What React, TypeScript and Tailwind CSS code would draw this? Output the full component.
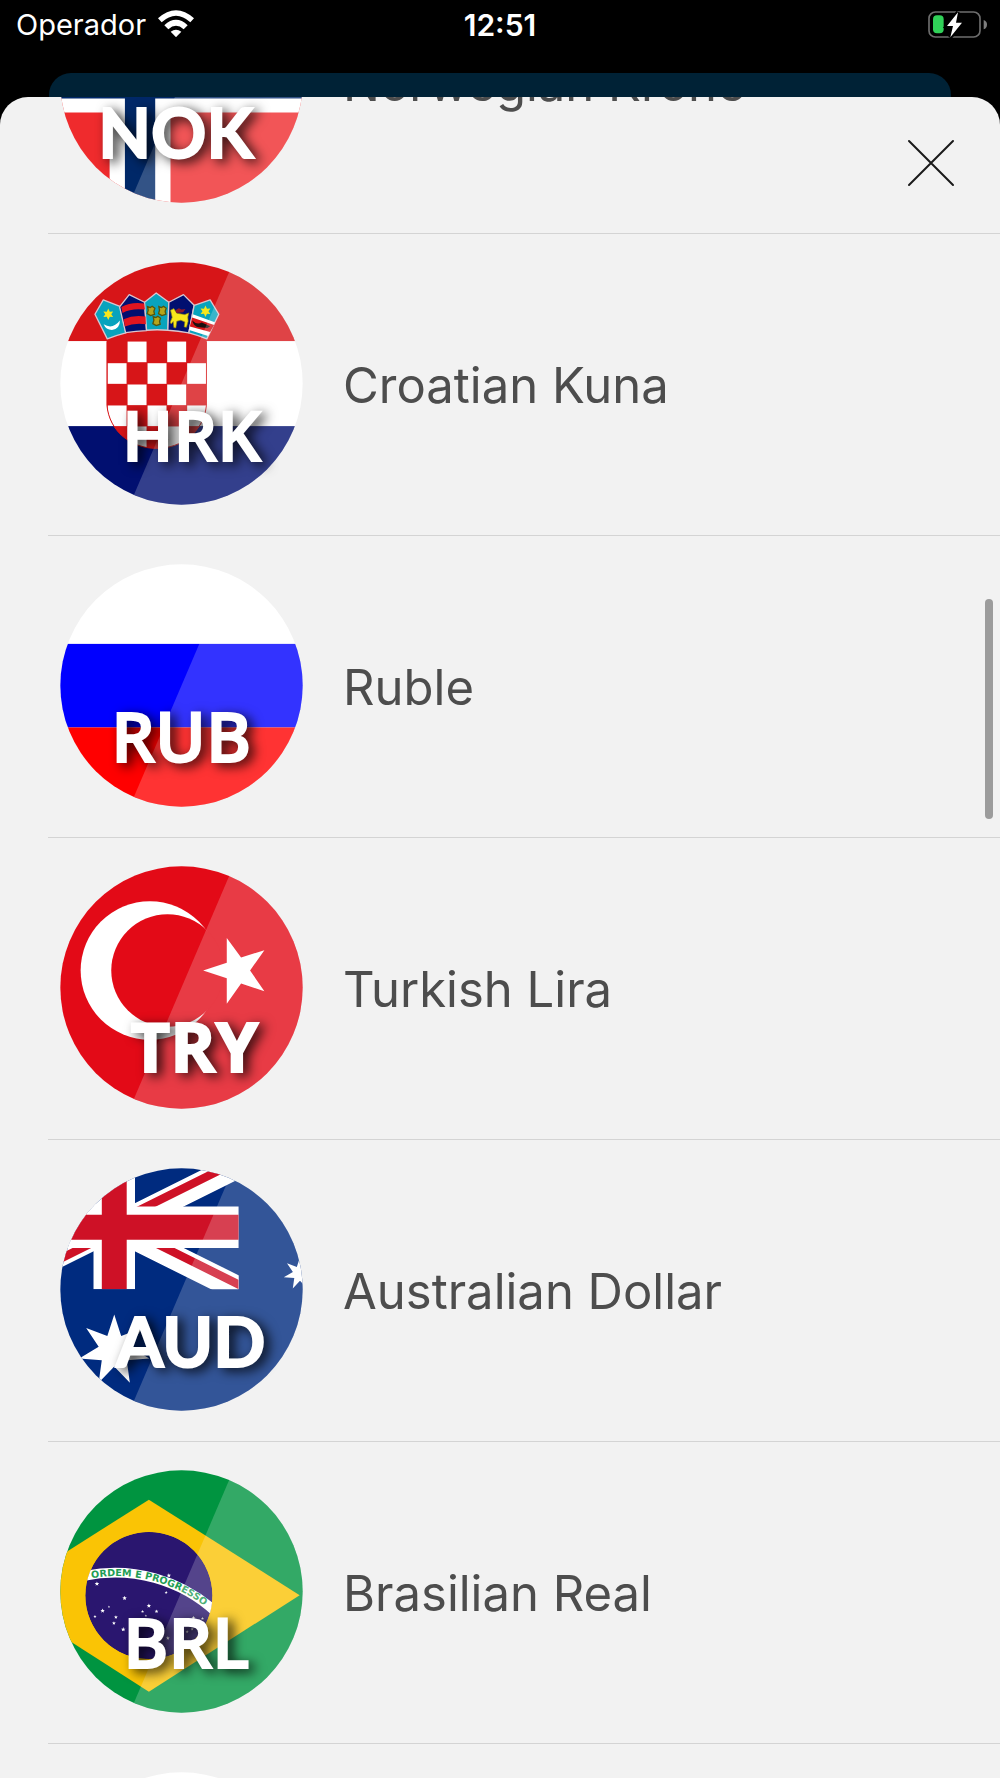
import React from 'react';

const starPoints = (cx: number, cy: number, r: number, inner: number, tips: number) => {
  const points: string[] = [];
  for (let i = 0; i < tips * 2; i++) {
    const radius = i % 2 === 0 ? r : inner;
    const angle = -Math.PI / 2 + (i * Math.PI) / tips;
    points.push(`${(cx + radius * Math.cos(angle)).toFixed(1)},${(cy + radius * Math.sin(angle)).toFixed(1)}`);
  }
  return points.join(' ');
};

const Norway = () => (
  <>
    <rect width="730" height="730" fill="#ef2b2d" />
    <path d="M0 276H730V458H0zM149 0H332V730H149z" fill="#fff" />
    <path d="M0 322H730V416H0zM195 0H286V730H195z" fill="#002868" />
  </>
);

const Croatia = () => {
  const columns = [141, 201, 261, 320, 380];
  const rows = [238, 303, 367, 430, 493];

  return (
    <>
      <rect width="730" height="238" fill="#d71518" />
      <rect y="238" width="730" height="255" fill="#fff" />
      <rect y="493" width="730" height="240" fill="#010f70" />
      <clipPath id="hr-shield">
        <path d="M141 215V430C148 510 215 560 290 560S432 510 440 430V215z" />
      </clipPath>
      <g clipPath="url(#hr-shield)">
        <rect x="141" y="215" width="300" height="350" fill="#d71518" />
        {rows.map((y, r) =>
          columns.map((x, c) =>
            (r + c) % 2 === 1 ? <rect key={`${r}-${c}`} x={x + 2} y={y + 1} width="57" height="62" fill="#fff" /> : null
          )
        )}
      </g>
      <path d="M141 238V430C148 510 215 560 290 560S432 510 440 430V238" fill="none" stroke="#d71518" strokeWidth="3" />
      <g stroke="#d9c6cf" strokeWidth="4" strokeLinejoin="round">
        <path d="M130 114L180 133L198 213Q170 220 142 231L105 157z" fill="#08a3bd" />
        <path d="M208 98L254 121L260 206Q228 207 197 212L179 135z" fill="#010f70" />
        <path d="M289 93L327 121L324 205Q292 202 260 205L254 121z" fill="#08a3bd" />
        <path d="M371 98L403 130L387 213Q355 207 324 205L327 121z" fill="#010f70" />
        <path d="M451 114L477 157L441 231Q414 220 387 213L403 130z" fill="#08a3bd" />
      </g>
      <polygon points={starPoints(145, 157, 17, 9, 6)} fill="#f8e71c" />
      <path d="M131 187Q158 204 180 176Q180 202 156 204Q138 204 131 187z" fill="#fff" />
      <path d="M184 135Q215 119 253 125L255 143Q215 138 188 153zM191 172Q222 158 257 164L258 187Q222 182 195 194z" fill="#e3151f" />
      <g fill="#b5a51c" stroke="#55550c" strokeWidth="4">
        <path d="M263 134l8 3 6-4 8 6-3 9 2 9-12 4-10-6 3-10zM297 134l8 3 6-4 8 6-3 9 2 9-12 4-10-6 3-10zM280 164l8 3 6-4 8 6-3 9 2 9-12 4-10-6 3-10z" />
      </g>
      <path d="M332 145l10-5 9 14 24 4 12-5-3 12 1 13-5 18-7-1 2-15-12-5-12 3-3 20-6-1-2-18-6 7-3-5 6-15z" fill="#f8e71c" stroke="#8b8210" strokeWidth="2" />
      <path d="M347 145l10-6 8 4 12-2-7 10-20 2z" fill="#8c1a2b" />
      <polygon points={starPoints(437, 148, 17, 9, 6)} fill="#f8e71c" />
      <path d="M399 157L465 181L459 194L445 222L388 204z" fill="#fff" />
      <path d="M397 167L463 189L451 210L390 194z" fill="#d71518" />
      <path d="M397 176Q411 190 426 182L451 193L443 198L418 196Q402 196 397 176z" fill="#1b1010" />
    </>
  );
};

const Russia = () => (
  <>
    <rect width="730" height="240" fill="#fff" />
    <rect y="240" width="730" height="251" fill="#00f" />
    <rect y="491" width="730" height="240" fill="#f00" />
  </>
);

const Turkey = () => (
  <>
    <rect width="730" height="730" fill="#e30a17" />
    <circle cx="270" cy="314" r="208" fill="#fff" />
    <circle cx="323" cy="314" r="169" fill="#e30a17" />
    <polygon points="430,314 501,291 501,216 544,275 614,253 571,314 614,376 544,353 501,414 501,337" fill="#fff" />
  </>
);

const Australia = () => (
  <>
    <rect width="730" height="730" fill="#002b7f" />
    <svg x="-211" y="-8" width="748" height="372" viewBox="0 0 60 30" preserveAspectRatio="none">
      <clipPath id="au-saltire">
        <path d="M30 15h30v15zv15h-30zh-30v-15zv-15h30z" />
      </clipPath>
      <path d="M0 0L60 30M60 0L0 30" stroke="#fff" strokeWidth="6" />
      <path d="M0 0L60 30M60 0L0 30" stroke="#ce1126" strokeWidth="4" clipPath="url(#au-saltire)" />
      <path d="M30 0V30M0 15H60" stroke="#fff" strokeWidth="10" />
      <path d="M30 0V30M0 15H60" stroke="#ce1126" strokeWidth="6" />
    </svg>
    <polygon points={starPoints(163, 548, 108, 48, 7)} fill="#fff" />
    <polygon points={starPoints(721, 317, 50, 22, 7)} fill="#fff" />
  </>
);

const Brazil = () => {
  const stars = [
    [111, 342, 6], [327, 317, 6], [319, 368, 4], [194, 385, 6], [267, 408, 6], [248, 425, 4],
    [290, 425, 5], [128, 423, 6], [147, 411, 3], [105, 440, 4], [168, 442, 5], [162, 460, 5],
    [190, 479, 6], [258, 438, 3], [401, 444, 5], [428, 446, 4], [324, 505, 5], [382, 486, 4],
    [397, 478, 4], [310, 484, 4],
  ];

  return (
    <>
      <rect width="730" height="730" fill="#009440" />
      <path d="M267 89L720 376L267 666L-186 376z" fill="#fac405" />
      <clipPath id="br-globe">
        <circle cx="267" cy="377" r="191" />
      </clipPath>
      <g clipPath="url(#br-globe)">
        <circle cx="267" cy="377" r="191" fill="#2a166f" />
        {stars.map(([x, y, r]) => (
          <polygon key={`${x}-${y}`} points={starPoints(x, y, r + 1, r / 2, 5)} fill="#fff" />
        ))}
        <path d="M60 321A446 446 0 0 1 480 438" fill="none" stroke="#fff" strokeWidth="29" />
      </g>
      <path id="br-motto" d="M95 325A436 436 0 0 1 480 449" fill="none" />
      <text className="font-['DejaVu_Sans'] font-bold" fontSize="29" fill="#1f9d55">
        <textPath href="#br-motto">ORDEM E PROGRESSO</textPath>
      </text>
    </>
  );
};

const Japan = () => (
  <>
    <rect width="730" height="730" fill="#fff" />
    <circle cx="365" cy="365" r="190" fill="#bc002d" />
  </>
);

const humanist = "font-['Open_Sans'] font-semibold";
const humanistBold = "font-['Open_Sans'] font-bold";
const geometric = "font-['Lato'] font-bold";

const currencies = [
  { code: 'NOK', name: 'Norwegian Krone', Art: Norway, x: 115, y: 599, font: geometric },
  { code: 'HRK', name: 'Croatian Kuna', Art: Croatia, x: 186, y: 600, font: humanist },
  { code: 'RUB', name: 'Ruble', Art: Russia, x: 154, y: 597, font: humanist },
  { code: 'TRY', name: 'Turkish Lira', Art: Turkey, x: 212, y: 622, font: humanistBold },
  { code: 'AUD', name: 'Australian Dollar', Art: Australia, x: 168, y: 600, font: geometric },
  { code: 'BRL', name: 'Brasilian Real', Art: Brazil, x: 190, y: 599, font: humanist },
  { code: 'JPY', name: 'Japanese Yen', Art: Japan, x: 200, y: 600, font: humanist },
];

type Currency = (typeof currencies)[number];

const FlagBadge = ({ code, Art, x, y, font }: Currency) => (
  <svg viewBox="0 0 730 730" className="size-[243px] shrink-0 overflow-visible" aria-hidden="true">
    <clipPath id={`badge-${code}`}>
      <circle cx="365" cy="365" r="364" />
    </clipPath>
    <g clipPath={`url(#badge-${code})`}>
      <Art />
      <path d="M521 0H730V730H209z" fill="#fff" fillOpacity="0.2" />
    </g>
    <text
      x={x}
      y={y - 3}
      fontSize="206"
      fill="#fff"
      stroke="#fff"
      strokeWidth="6"
      className={`${font} drop-shadow-[16px_10px_18px_rgba(0,0,0,0.8)]`}
    >
      {code}
    </text>
  </svg>
);

const StatusBar = () => (
  <header className="grid h-[73px] shrink-0 grid-cols-3 items-start px-4 pt-[9px] text-white">
    <div className="flex h-8 items-center gap-3 text-[29px] leading-8">
      <span>Operador</span>
      <svg viewBox="0 0 108 80" className="-mt-1 h-[27px] w-9" fill="#fff" aria-hidden="true">
        <path d="M0 24Q54-24 108 24L97 36Q54-3 11 36z" />
        <path d="M19 45Q54 13 89 45L77 57Q54 37 31 57z" />
        <path d="M38 65Q54 53 70 65L54 81z" />
      </svg>
    </div>
    <div className="text-center text-[30px] leading-8 font-semibold">12:51</div>
    <svg viewBox="0 0 177 81" className="mt-[2px] -mr-[3px] h-[27px] w-[59px] justify-self-end" aria-hidden="true">
      <rect x="3" y="3" width="153" height="75" rx="19" fill="none" stroke="#6d6d6d" strokeWidth="5" />
      <path d="M167 27Q177 31 177 41T167 55z" fill="#7d7d7d" />
      <rect x="15" y="13" width="32" height="54" rx="12" fill="#30d158" />
      <path d="M90 4L57 45H75L67 79L102 35H84z" fill="#fff" stroke="#000" strokeWidth="12" paintOrder="stroke" />
    </svg>
  </header>
);

const App = () => {
  return (
    <div className="flex h-screen flex-col overflow-hidden bg-black font-['Inter',sans-serif]">
      <StatusBar />
      <div className="mx-[49px] -mb-4 h-10 shrink-0 rounded-t-[22px] bg-[#002236]" />

      <main className="relative flex-1 overflow-hidden rounded-t-[28px] bg-[#f2f2f2]">
        <ul className="-mt-[165px] pl-12">
          {currencies.map((currency) => (
            <li key={currency.code} className="border-b border-[#d4d4d4]">
              <button type="button" className="flex h-[301px] w-full items-center gap-10 pb-[2px] pl-3 text-left">
                <FlagBadge {...currency} />
                <span className="pt-1 text-[49px] leading-[60px] text-[#4d4d4d]">{currency.name}</span>
              </button>
            </li>
          ))}
        </ul>

        <button type="button" aria-label="Close" className="absolute top-10 right-[43px] p-[2px]">
          <svg viewBox="0 0 48 48" className="size-12" stroke="#1a1a1a" strokeWidth="2" strokeLinecap="round">
            <path d="M2 2L46 46M46 2L2 46" />
          </svg>
        </button>
        <div className="absolute top-[502px] right-[7px] h-[220px] w-2 rounded-full bg-[#9c9c9c]" />
      </main>
    </div>
  );
};

export default App;
